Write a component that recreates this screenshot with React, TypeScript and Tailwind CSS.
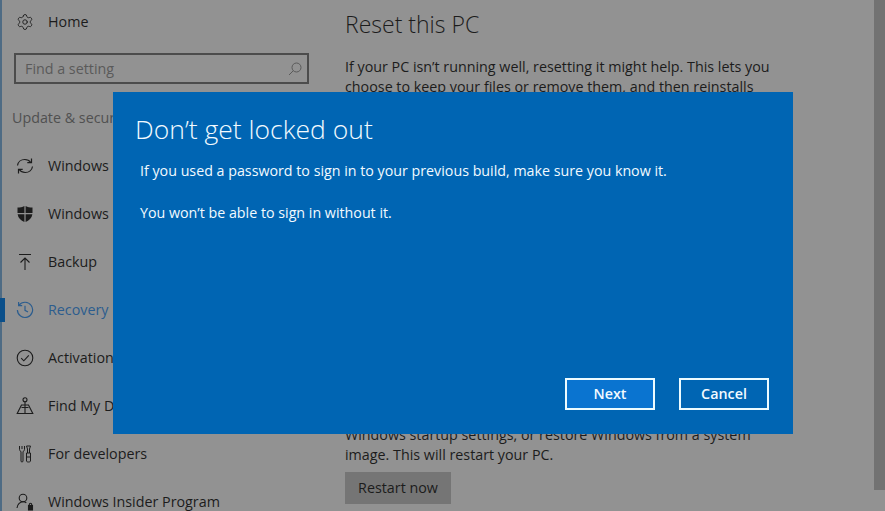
import { Settings } from "lucide-react";

const FONT = "font-['Open_Sans','Noto_Sans',sans-serif]";

function SyncIcon() {
  return (
    <svg width="18" height="18" viewBox="0 0 18 18" fill="none" stroke="currentColor" strokeWidth="1.2">
      <path d="M1.500 8.500C2 5 5 2.500 8.800 2.500c2.600 0 4.600 1 6 3" />
      <path d="M16.500 9.500c-.5 3.500-3.500 6-7.300 6-2.600 0-4.600-1-6-3" />
      <path d="M15.500 1.500v4.200h-4.200M2.500 16.500v-4.200h4.200" />
    </svg>
  );
}

function ShieldIcon() {
  return (
    <svg width="18" height="18" viewBox="0 0 18 18" fill="currentColor">
      <path d="M1.500 2.500C4 2.500 6.500 2 8.400 1v7H1.500ZM9.600 1c1.900 1 4.400 1.500 6.900 1.500V8H9.600ZM1.600 9.200h6.800V17C5 15.600 2.200 13 1.600 9.200ZM9.600 9.200h6.800C15.800 13 13 15.600 9.600 17Z" />
    </svg>
  );
}

function BackupIcon() {
  return (
    <svg width="18" height="18" viewBox="0 0 18 18" fill="none" stroke="currentColor" strokeWidth="1.1">
      <path d="M3 1.500h12M9 17V5M4.500 9.500 9 5l4.500 4.500" />
    </svg>
  );
}

function RecoveryIcon() {
  return (
    <svg width="18" height="18" viewBox="0 0 18 18" fill="none" stroke="currentColor" strokeWidth="1.2">
      <path d="M3 4.200A7.600 7.600 0 1 1 1.400 9" />
      <path d="M2.600 1v3.600h3.600M9 4.800v4.600l3 1.600" />
    </svg>
  );
}

function CheckCircleIcon() {
  return (
    <svg width="18" height="18" viewBox="0 0 18 18" fill="none" stroke="currentColor" strokeWidth="1.1">
      <circle cx="9" cy="9" r="7.800" />
      <path d="m5.200 9.200 2.600 2.600 5-5.400" />
    </svg>
  );
}

function FindDeviceIcon() {
  return (
    <svg width="18" height="18" viewBox="0 0 18 18" fill="none" stroke="currentColor" strokeWidth="1.1">
      <circle cx="9" cy="2.800" r="2" />
      <path d="M9 4.800V16M5.500 10.500h7M5.500 8 1.200 16.500h15.600L12.500 8Z" />
    </svg>
  );
}

function DevelopersIcon() {
  return (
    <svg width="18" height="18" viewBox="0 0 18 18" fill="none" stroke="currentColor" strokeWidth="1">
      <path d="M3.500 1v3.500c0 1 .7 1.700 1.500 2V16c0 .6.4 1 1 1s1-.4 1-1V6.500c.8-.3 1.500-1 1.500-2V1M6 1v3" />
      <path d="M10.500 8h4v8c0 .6-.8 1-2 1s-2-.4-2-1ZM11.500 8V4l-1-3h4l-1 3v4M10.500 12h4" />
    </svg>
  );
}

function InsiderIcon() {
  return (
    <svg width="18" height="18" viewBox="0 0 18 18" fill="none" stroke="currentColor" strokeWidth="1.100">
      <circle cx="7" cy="5" r="3.800" />
      <path d="M1 15c.3-3.400 2.800-6.200 6-6.200 1.300 0 2.400.3 3.300 1" />
      <rect x="12.500" y="12.500" width="4" height="4.500" fill="currentColor" />
      <path d="M13.300 12.500v-1a1.200 1.200 0 0 1 2.400 0v1" />
    </svg>
  );
}

const NAV_ITEMS = [
  { label: "Windows Update", icon: <SyncIcon /> },
  { label: "Windows Defender", icon: <ShieldIcon /> },
  { label: "Backup", icon: <BackupIcon /> },
  { label: "Recovery", icon: <RecoveryIcon />, active: true },
  { label: "Activation", icon: <CheckCircleIcon /> },
  { label: "Find My Device", icon: <FindDeviceIcon /> },
  { label: "For developers", icon: <DevelopersIcon /> },
  { label: "Windows Insider Program", icon: <InsiderIcon /> },
];

function Sidebar() {
  return (
    <aside className="flex h-full w-[320px] shrink-0 flex-col border-l-2 border-[#4e6b84]">
      <div className="flex h-[43px] shrink-0 items-center gap-[14px] pl-[14px] text-[#1c1c1c]">
        <Settings size={18} strokeWidth={1.2} />
        <span className="text-[14.3px]">Home</span>
      </div>
      <div className="mt-[10px] ml-[12px] flex h-[31px] w-[295px] shrink-0 items-center justify-between border-2 border-[#4c4c4c] pr-[5px] pl-[9px] text-[#5a5a5a]">
        <span className="text-[14.3px]">Find a setting</span>
        <svg width="14" height="14" viewBox="0 0 14 14" fill="none" stroke="currentColor" strokeWidth="1">
          <circle cx="8.500" cy="5.500" r="4.500" />
          <path d="M5.300 8.700 1 13" />
        </svg>
      </div>
      <p className="mt-[24px] ml-[10px] text-[14.3px] leading-5 text-[#505050]">Update &amp; security</p>
      <nav className="mt-[14px] flex flex-col">
        {NAV_ITEMS.map((item) => (
          <div
            key={item.label}
            className={`flex h-12 shrink-0 items-center gap-[14px] pl-[14px] ${item.active ? "text-[#2c5d8e]" : "text-[#1c1c1c]"}`}
          >
            {item.active && <span className="absolute left-0 h-6 w-[5px] bg-[#0b4f8a]" />}
            {item.icon}
            <span className="whitespace-nowrap text-[14.3px]">{item.label}</span>
          </div>
        ))}
      </nav>
    </aside>
  );
}

function MainContent() {
  return (
    <main className="h-full flex-1 pt-[6px] pl-[25px] text-[#1c1c1c]">
      <h1 className="text-[23px] leading-9 font-light">Reset this PC</h1>
      <p className="mt-[15px] w-[440px] text-[14.3px] leading-5">
        If your PC isn&rsquo;t running well, resetting it might help. This lets you choose to keep your files or remove them, and then reinstalls
      </p>
      <p className="mt-[328px] w-[440px] text-[14.3px] leading-5">
        Windows startup settings, or restore Windows from a system image. This will restart your PC.
      </p>
      <button className="mt-[7px] h-[32px] w-[106px] bg-[#757575] text-[14.3px]" type="button">Restart now</button>
    </main>
  );
}

function LockedOutDialog() {
  return (
    <div className="absolute top-[92px] left-[113px] flex h-[342px] w-[680px] flex-col bg-[#0065b3] pt-[19px] pr-6 pb-[24px] pl-[22px] text-[#f2faff]">
      <h2 className="text-[26.500px] leading-9 font-light">Don&rsquo;t get locked out</h2>
      <p className="mt-[14px] ml-[5px] text-[14.25px] leading-5">If you used a password to sign in to your previous build, make sure you know it.</p>
      <p className="mt-[22px] ml-[5px] text-[14.25px] leading-5">You won&rsquo;t be able to sign in without it.</p>
      <div className="mt-auto flex justify-end gap-6">
        <button className="h-8 w-[90px] border-2 border-[#ecfbff] bg-[#0a74d0] text-[14.3px] font-semibold" type="button">Next</button>
        <button className="h-8 w-[90px] border-2 border-[#ecfbff] bg-[#0065b3] text-[14.3px] font-semibold" type="button">Cancel</button>
      </div>
    </div>
  );
}

export default function App() {
  return (
    <div className={`relative flex h-[511px] w-[885px] overflow-hidden bg-[#929292] ${FONT}`}>
      <Sidebar />
      <MainContent />
      <div className="h-full w-[11px] shrink-0">
        <div className="h-[490px] bg-[#727272]" />
      </div>
      <LockedOutDialog />
    </div>
  );
}
